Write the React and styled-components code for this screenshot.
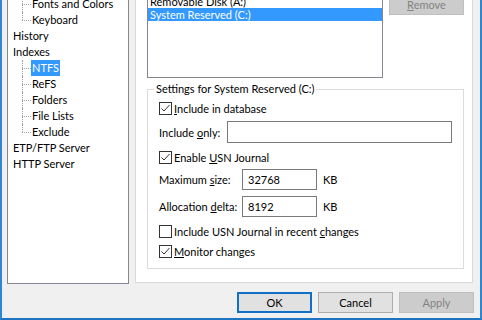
import React from 'react';
import styled, { createGlobalStyle } from 'styled-components';

const GlobalStyle = createGlobalStyle`
  html, body {
    margin: 0;
    padding: 0;
    background: #f0f0f0;
  }
  body {
    font-family: Lato, "Noto Sans", sans-serif;
    font-size: 11px;
    color: #000;
  }
`;

const Window = styled.div`
  width: 482px;
  height: 320px;
  box-sizing: border-box;
  border-left: 2px solid #2f86d2;
  border-right: 2px solid #2f86d2;
  border-bottom: 2px solid #1d74c0;
  background: #f0f0f0;
  overflow: hidden;
  display: flex;
  flex-direction: column;
`;

const Body = styled.div`
  display: flex;
  height: 284px;
  padding: 0 7px 0 5px;
  flex-shrink: 0;
`;

const TreePanel = styled.div`
  width: 122px;
  height: 284px;
  box-sizing: border-box;
  border: 1px solid #828790;
  border-top: none;
  background: #fff;
  overflow: hidden;
`;

const TreeList = styled.div`
  margin-top: -4px;
  display: flex;
  flex-direction: column;
`;

const TopRow = styled.div`
  display: flex;
  align-items: center;
  height: 16px;
  padding-left: 4px;
`;

const ChildRow = styled.div`
  display: flex;
  align-items: center;
  height: 16px;
`;

const Connector = styled.span`
  position: relative;
  width: 9px;
  height: 16px;
  margin-left: 14px;
  flex-shrink: 0;
  &::before {
    content: '';
    position: absolute;
    left: 0;
    top: 0;
    height: ${(p) => (p.$last ? '8px' : '16px')};
    border-left: 1px dotted #a0a0a0;
  }
  &::after {
    content: '';
    position: absolute;
    left: 0;
    top: 8px;
    width: 9px;
    border-top: 1px dotted #a0a0a0;
  }
`;

const NodeLabel = styled.span`
  padding: 0 1px;
  line-height: 16px;
  white-space: nowrap;
  background: ${(p) => (p.$selected ? '#3399ff' : 'transparent')};
  color: ${(p) => (p.$selected ? '#fff' : '#000')};
`;

const TabPage = styled.div`
  width: 338px;
  height: 283px;
  margin-left: 6px;
  box-sizing: border-box;
  border: 1px solid #d9d9d9;
  border-top: none;
  background: #fff;
  padding: 0 8px 0 11px;
  overflow: hidden;
`;

const DriveRow = styled.div`
  display: flex;
  align-items: flex-start;
  margin-top: -6px;
`;

const DriveList = styled.div`
  width: 236px;
  height: 84px;
  box-sizing: border-box;
  border: 1px solid #828790;
  background: #fff;
  display: flex;
  flex-direction: column;
`;

const DriveItem = styled.div`
  height: 13px;
  line-height: 13px;
  padding-left: 2px;
  white-space: nowrap;
  background: ${(p) => (p.$selected ? '#3399ff' : 'transparent')};
  color: ${(p) => (p.$selected ? '#fff' : '#000')};
`;

const Button = styled.button`
  width: 75px;
  height: 21px;
  box-sizing: border-box;
  padding: 0;
  margin: ${(p) => p.$margin || '0'};
  font-family: inherit;
  font-size: 11px;
  line-height: 17px;
  background: ${(p) => (p.disabled ? '#cccccc' : '#e1e1e1')};
  color: ${(p) => (p.disabled ? '#838383' : '#000')};
  border: ${(p) =>
    p.$default ? '2px solid #0f70c6' : p.disabled ? '1px solid #bfbfbf' : '1px solid #adadad'};
  border-radius: 0;
`;

const GroupBox = styled.fieldset`
  margin: 4px 0 0 0;
  min-width: 0;
  border: 1px solid #dcdcdc;
  padding: 0 11px 9px 11px;
  display: flex;
  flex-direction: column;
`;

const Legend = styled.legend`
  line-height: 14px;
  padding: 0 2px;
  margin-left: -5px;
`;

const Row = styled.div`
  display: flex;
  align-items: center;
  height: ${(p) => p.$h || 16}px;
  margin-top: ${(p) => p.$mt || 0}px;
  white-space: nowrap;
`;

const Box = styled.span`
  width: 13px;
  height: 13px;
  box-sizing: border-box;
  border: 1px solid #333;
  background: #fff;
  flex-shrink: 0;
  display: flex;
  align-items: center;
  justify-content: center;
`;

const CheckText = styled.span`
  margin-left: 2px;
`;

const FieldLabel = styled.span`
  width: ${(p) => p.$w}px;
  flex-shrink: 0;
`;

const TextBox = styled.div`
  height: ${(p) => p.$h || 21}px;
  box-sizing: border-box;
  border: 1px solid #7a7a7a;
  background: #fff;
  padding-left: 5px;
  display: flex;
  align-items: center;
  width: ${(p) => (p.$w ? `${p.$w}px` : 'auto')};
  flex: ${(p) => (p.$w ? '0 0 auto' : '1')};
`;

const Unit = styled.span`
  margin-left: 6px;
`;

const Key = styled.span`
  text-decoration: underline;
  text-underline-offset: 1px;
`;

const Footer = styled.div`
  display: flex;
  justify-content: flex-end;
  gap: 6px;
  margin-top: 8px;
  padding-right: 6px;
`;

const Check = ({ checked, children }) => (
  <>
    <Box>
      {checked && (
        <svg width="11" height="11" viewBox="0 0 11 11">
          <polyline points="1.5,5.5 4,8 9.5,2" fill="none" stroke="#333" strokeWidth="1" />
        </svg>
      )}
    </Box>
    <CheckText>{children}</CheckText>
  </>
);

const Child = ({ last, selected, children }) => (
  <ChildRow>
    <Connector $last={last} />
    <NodeLabel $selected={selected}>{children}</NodeLabel>
  </ChildRow>
);

const Top = ({ children }) => (
  <TopRow>
    <NodeLabel>{children}</NodeLabel>
  </TopRow>
);

export default function App() {
  return (
    <>
      <GlobalStyle />
      <Window>
        <Body>
          <TreePanel>
            <TreeList>
              <Child>Fonts and Colors</Child>
              <Child last>Keyboard</Child>
              <Top>History</Top>
              <Top>Indexes</Top>
              <Child selected>NTFS</Child>
              <Child>ReFS</Child>
              <Child>Folders</Child>
              <Child>File Lists</Child>
              <Child last>Exclude</Child>
              <Top>ETP/FTP Server</Top>
              <Top>HTTP Server</Top>
            </TreeList>
          </TreePanel>
          <TabPage>
            <DriveRow>
              <DriveList>
                <DriveItem>Removable Disk (A:)</DriveItem>
                <DriveItem $selected>System Reserved (C:)</DriveItem>
              </DriveList>
              <Button disabled $margin="0 0 0 6px">
                <Key>R</Key>emove
              </Button>
            </DriveRow>
            <GroupBox>
              <Legend>Settings for System Reserved (C:)</Legend>
              <Row $mt={4}>
                <Check checked>
                  <Key>I</Key>nclude in database
                </Check>
              </Row>
              <Row $mt={5} $h={22}>
                <FieldLabel $w={68}>
                  Include <Key>o</Key>nly:
                </FieldLabel>
                <TextBox $h={22} />
              </Row>
              <Row $mt={6}>
                <Check checked>
                  Enable <Key>U</Key>SN Journal
                </Check>
              </Row>
              <Row $mt={4} $h={21}>
                <FieldLabel $w={83}>
                  Maximum <Key>s</Key>ize:
                </FieldLabel>
                <TextBox $w={75}>32768</TextBox>
                <Unit>KB</Unit>
              </Row>
              <Row $mt={6} $h={21}>
                <FieldLabel $w={83}>
                  Allocation <Key>d</Key>elta:
                </FieldLabel>
                <TextBox $w={75}>8192</TextBox>
                <Unit>KB</Unit>
              </Row>
              <Row $mt={6}>
                <Check>
                  Include USN Journal in recent <Key>c</Key>hanges
                </Check>
              </Row>
              <Row $mt={4}>
                <Check checked>
                  <Key>M</Key>onitor changes
                </Check>
              </Row>
            </GroupBox>
          </TabPage>
        </Body>
        <Footer>
          <Button $default>OK</Button>
          <Button>Cancel</Button>
          <Button disabled>Apply</Button>
        </Footer>
      </Window>
    </>
  );
}
